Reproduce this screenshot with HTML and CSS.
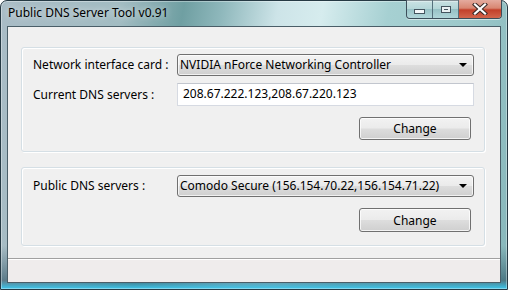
FILE: index.html
```html
<!DOCTYPE html>
<html lang="en">
<head>
  <meta charset="UTF-8" />
  <title>Public DNS Server Tool v0.91</title>
  <link rel="stylesheet" href="styles.css">
</head>
<body>
  <div class="window">
    <div class="titlebar">
      <span class="title">Public DNS Server Tool v0.91</span>
      <div class="caption-buttons">
        <div class="cap-btn cap-min"><span class="min-glyph"></span></div>
        <div class="cap-btn cap-max"><span class="max-glyph"></span></div>
        <div class="cap-btn cap-close">
          <svg width="16" height="12" viewBox="0 0 16 12">
            <path d="M3 1.5 L13 10.5 M13 1.5 L3 10.5" stroke="#3a2a28" stroke-width="4.2" stroke-linecap="square"/>
            <path d="M3 1.5 L13 10.5 M13 1.5 L3 10.5" stroke="#ffffff" stroke-width="2.2" stroke-linecap="square"/>
          </svg>
        </div>
      </div>
    </div>

    <div class="client">
      <div class="group group-nic">
        <div class="row">
          <label class="label">Network interface card :</label>
          <div class="combo">
            <span class="combo-text">NVIDIA nForce Networking Controller</span>
            <span class="combo-arrow"></span>
          </div>
        </div>
        <div class="row row-gap">
          <label class="label">Current DNS servers :</label>
          <div class="textbox">208.67.222.123,208.67.220.123</div>
        </div>
        <div class="row row-btn">
          <button class="btn">Change</button>
        </div>
      </div>

      <div class="group group-public">
        <div class="row">
          <label class="label">Public DNS servers :</label>
          <div class="combo">
            <span class="combo-text">Comodo Secure (156.154.70.22,156.154.71.22)</span>
            <span class="combo-arrow"></span>
          </div>
        </div>
        <div class="row row-btn">
          <button class="btn btn-tall">Change</button>
        </div>
      </div>

      <div class="statusbar"></div>
    </div>
  </div>
</body>
</html>
```

FILE: styles.css
```css
body {
  margin: 0;
  font-family: "Noto Sans", "DejaVu Sans", sans-serif;
  font-size: 12px;
  background-color: #ffffff;
}
.window {
  width: 508px;
  height: 290px;
  box-sizing: border-box;
  border: 1px solid #263a44;
  border-radius: 7px 7px 0 0;
  padding: 0 6px 6px 6px;
  display: flex;
  flex-direction: column;
  background:
    linear-gradient(180deg, rgba(255,255,255,0) 85%, rgba(20,60,80,0.5) 97%, #3cc8ee 100%),
    linear-gradient(100deg, #a9bcc6 0%, #a2bcc2 22%, #6f9fa2 33%, #8fb8bc 40%, #cde4e8 50%, #d6ecee 58%, #a6d0d2 70%, #9cc8ca 85%, #86b6ba 100%);
  box-shadow: inset 0 0 0 1px rgba(255,255,255,0.35);
}
.titlebar {
  height: 25px;
  display: flex;
  justify-content: space-between;
  align-items: flex-start;
  padding-left: 1px;
}
.title {
  margin-top: 4px;
  color: #000;
  line-height: 16px;
  text-shadow: 0 0 6px rgba(255,255,255,0.8);
}
.caption-buttons {
  display: flex;
  margin-top: -1px;
  margin-right: -1px;
  height: 18px;
  border: 1px solid #3c4e5a;
  border-top: none;
  border-radius: 0 0 4px 4px;
  overflow: hidden;
  box-shadow: 0 1px 0 rgba(255,255,255,0.5);
}
.cap-btn {
  height: 18px;
  display: flex;
  align-items: center;
  justify-content: center;
}
.cap-min, .cap-max {
  width: 25px;
  background: linear-gradient(180deg, rgba(255,255,255,0.45) 0%, rgba(255,255,255,0.2) 50%, rgba(120,160,170,0.25) 51%, rgba(200,230,235,0.4) 100%);
  border-right: 1px solid #55707c;
}
.cap-close {
  width: 42px;
  background: linear-gradient(180deg, #e4ab9e 0%, #d88672 45%, #c2402a 55%, #d2654c 100%);
}
.min-glyph {
  width: 9px;
  height: 3px;
  margin-top: 5px;
  background: #f4f8fa;
  border: 1px solid #44545e;
}
.max-glyph {
  width: 8px;
  height: 5px;
  border: 1px solid #44545e;
  box-shadow: inset 0 0 0 2px #e8f0f2, inset 0 0 0 3px #44545e;
}
.client {
  flex: 1;
  display: flex;
  flex-direction: column;
  background-color: #f0f0f0;
  border: 1px solid #4a5e68;
  padding-top: 20px;
}
.group {
  margin: 0 15px 0 13px;
  border: 1px solid #d5dfe5;
  border-radius: 3px;
  box-shadow: inset 1px 1px 0 #ffffff, 1px 1px 0 #ffffff;
  padding: 0 10px 0 11px;
}
.group-nic {
  height: 105px;
  box-sizing: border-box;
  padding-top: 6px;
}
.group-public {
  height: 79px;
  box-sizing: border-box;
  margin-top: 15px;
  padding-top: 7px;
}
.row {
  display: flex;
  align-items: center;
}
.row-gap {
  margin-top: 7px;
}
.row-btn {
  justify-content: flex-end;
  margin-top: 11px;
  padding-right: 3px;
}
.label {
  width: 144px;
  flex-shrink: 0;
  color: #000;
  line-height: 16px;
}
.combo {
  width: 297px;
  height: 22px;
  box-sizing: border-box;
  border: 1px solid #707070;
  border-radius: 3px;
  background: linear-gradient(180deg, #f3f3f3 0%, #ebebeb 48%, #dddddd 52%, #cfcfcf 100%);
  box-shadow: inset 0 0 0 1px rgba(255,255,255,0.7);
  display: flex;
  align-items: center;
  justify-content: space-between;
  padding: 0 6px 0 2px;
}
.combo-text {
  color: #000;
  line-height: 16px;
  white-space: nowrap;
}
.combo-arrow {
  width: 0;
  height: 0;
  border-left: 4px solid transparent;
  border-right: 4px solid transparent;
  border-top: 4px solid #000;
}
.textbox {
  width: 297px;
  height: 23px;
  box-sizing: border-box;
  border: 1px solid #d6dae2;
  border-top-color: #c2c6ce;
  background: #ffffff;
  padding-left: 5px;
  line-height: 20px;
  color: #000;
}
.btn {
  width: 112px;
  height: 23px;
  font-family: inherit;
  font-size: 12px;
  color: #000;
  border: 1px solid #707070;
  border-radius: 3px;
  background: linear-gradient(180deg, #f2f2f2 0%, #ebebeb 48%, #dddddd 52%, #cfcfcf 100%);
  box-shadow: inset 0 0 0 1px rgba(255,255,255,0.75);
  padding: 0;
}
.btn-tall {
  height: 24px;
}
.statusbar {
  margin-top: 12px;
  flex: 1;
  border-top: 1px solid #a0a0a0;
  box-shadow: inset 0 1px 0 #ffffff;
  background-color: #efecec;
}
```
